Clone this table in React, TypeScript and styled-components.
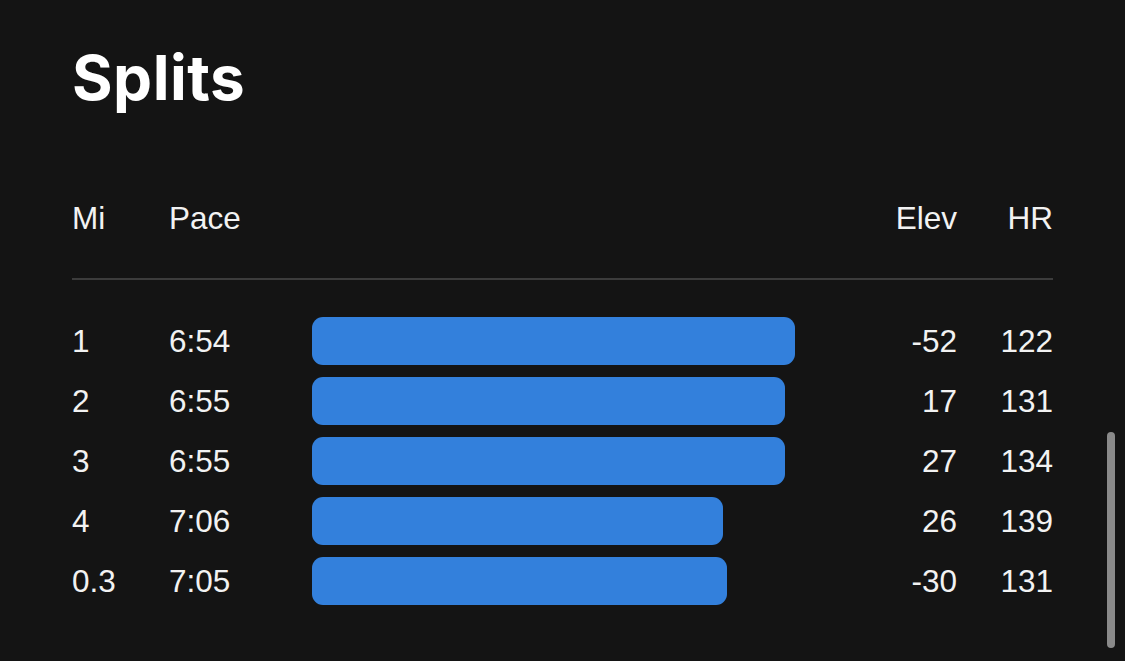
import React from "react";
import styled, { createGlobalStyle } from "styled-components";

const GlobalStyle = createGlobalStyle`
  html, body {
    margin: 0;
    padding: 0;
    background: #141414;
  }
  body {
    font-family: "Liberation Sans", Arial, sans-serif;
    color: #f2f2f2;
    overflow: hidden;
  }
`;

const Page = styled.div`
  position: relative;
  min-height: 661px;
  box-sizing: border-box;
  padding: 50px 72px 0 72px;
  background: #141414;
`;

const Title = styled.h1`
  margin: 0;
  font-family: Inter, "Liberation Sans", Arial, sans-serif;
  font-weight: 700;
  font-size: 62px;
  line-height: 56px;
  letter-spacing: 0.5px;
  color: #ffffff;
`;

const Table = styled.div`
  margin-top: 92px;
  display: flex;
  flex-direction: column;
`;

const Grid = styled.div`
  display: grid;
  grid-template-columns: 97px 143px 1fr 100px 96px;
  align-items: center;
  font-size: 31.5px;
  line-height: 40px;
`;

const HeaderRow = styled(Grid)`
  padding-bottom: 40px;
  border-bottom: 2px solid #3c3c3c;
`;

const Rows = styled.div`
  display: flex;
  flex-direction: column;
  gap: 12px;
  padding-top: 37px;
`;

const Row = styled(Grid)`
  height: 48px;
`;

const Cell = styled.div<{ $right?: boolean }>`
  text-align: ${(p) => (p.$right ? "right" : "left")};
  white-space: nowrap;
`;

const BarTrack = styled.div`
  height: 48px;
  display: flex;
  align-items: center;
`;

const Bar = styled.div`
  height: 48px;
  border-radius: 11px;
  background: #3380dc;
`;

const ScrollThumb = styled.div`
  position: absolute;
  left: 1107px;
  top: 432px;
  width: 8px;
  height: 216px;
  border-radius: 4px;
  background: #8a8a8a;
`;

const splits = [
  { mi: "1", pace: "6:54", bar: 483, elev: "-52", hr: "122" },
  { mi: "2", pace: "6:55", bar: 473, elev: "17", hr: "131" },
  { mi: "3", pace: "6:55", bar: 473, elev: "27", hr: "134" },
  { mi: "4", pace: "7:06", bar: 411, elev: "26", hr: "139" },
  { mi: "0.3", pace: "7:05", bar: 415, elev: "-30", hr: "131" },
];

export default function App() {
  return (
    <>
      <GlobalStyle />
      <Page>
        <Title>Splits</Title>
        <Table>
          <HeaderRow>
            <Cell>Mi</Cell>
            <Cell>Pace</Cell>
            <Cell />
            <Cell $right>Elev</Cell>
            <Cell $right>HR</Cell>
          </HeaderRow>
          <Rows>
            {splits.map((s, i) => (
              <Row key={i}>
                <Cell>{s.mi}</Cell>
                <Cell>{s.pace}</Cell>
                <BarTrack>
                  <Bar style={{ width: s.bar }} />
                </BarTrack>
                <Cell $right>{s.elev}</Cell>
                <Cell $right>{s.hr}</Cell>
              </Row>
            ))}
          </Rows>
        </Table>
        <ScrollThumb />
      </Page>
    </>
  );
}
